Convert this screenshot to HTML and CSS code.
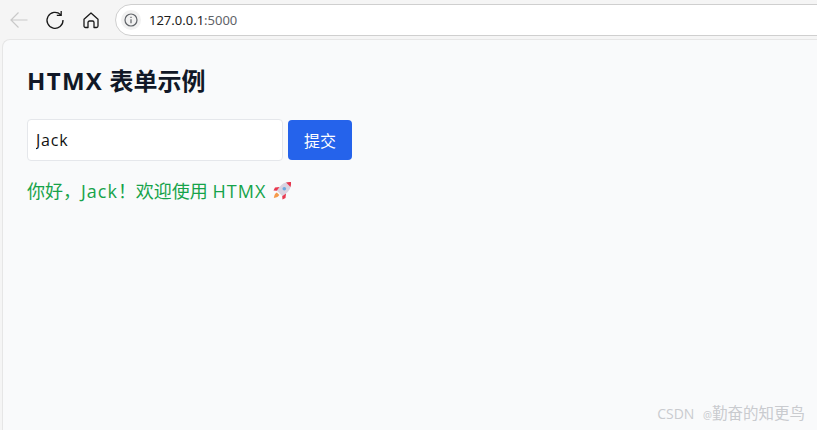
FILE: index.html
```html
<!DOCTYPE html>
<html lang="zh-CN">
<head>
	<meta charset="UTF-8">
	<title>HTMX 表单示例</title>
	<link rel="stylesheet" href="styles.css">
</head>
<body>

	<header class="toolbar">
		<button class="nav-btn back">
			<svg width="20" height="20" viewBox="0 0 20 20"><path d="M18.500 10H2M9.500 2.500 2 10l7.500 7.500" fill="none" stroke="#c9c9c9" stroke-width="1.200"/></svg>
		</button>
		<button class="nav-btn reload">
			<svg width="20" height="20" viewBox="0 0 20 20"><path d="M15.600 4.600A8 8 0 1 0 18 10M16.200 1v4.400h-4.400" fill="none" stroke="#1a1a1a" stroke-width="1.300"/></svg>
		</button>
		<button class="nav-btn home">
			<svg width="18" height="18" viewBox="0 0 18 18"><path d="M2 8.200 9 2l7 6.200V15a1.500 1.500 0 0 1-1.500 1.500H12V11.500a1.500 1.500 0 0 0-1.500-1.500h-3A1.500 1.500 0 0 0 6 11.500v5H3.500A1.500 1.500 0 0 1 2 15z" fill="none" stroke="#1a1a1a" stroke-width="1.300" stroke-linejoin="round"/></svg>
		</button>
		<div class="omnibox">
			<span class="site-info">
				<svg width="14" height="14" viewBox="0 0 14 14"><circle cx="7" cy="7" r="6" fill="none" stroke="#5f6368" stroke-width="1.200"/><path d="M7 6.200v4M7 3.800v1.200" stroke="#5f6368" stroke-width="1.200"/></svg>
			</span>
			<span class="url">127.0.0.1<span class="port">:5000</span></span>
		</div>
	</header>

	<main class="page">
		<h1><span class="latin">HTMX</span> 表单示例</h1>
		<form class="name-form">
			<input type="text" value="Jack">
			<button type="button">提交</button>
		</form>
		<p class="greeting">你好，<span class="latin">Jack</span>！欢迎使用 <span class="latin">HTMX</span>
			<svg class="rocket" width="20" height="20" viewBox="0 0 20 20">
				<path d="M19 1c-5-.5-9 1.500-11.500 5L4.800 9.500l5.700 5.700L14 12.500C17.500 10 19.500 6 19 1z" fill="#d9d3e0"/>
				<path d="M19 1c-1.800-.2-3.400 0-4.900.5l4.400 4.400c.5-1.500.7-3.100.5-4.900z" fill="#e8384f"/>
				<circle cx="12.300" cy="7.700" r="1.800" fill="#6aa9e0"/>
				<path d="M7.500 6 3 6.500 1.500 9.500l3.300.3zM14 12.500l-.5 4.500-3 1.500-.3-3.300z" fill="#e8384f"/>
				<path d="M4.800 11.500c-1.500.8-2.500 2.300-3 5.500 3-.5 4.700-1.500 5.500-3z" fill="#f59a4a"/>
			</svg>
		</p>
		<div class="watermark">CSDN <span class="at">@</span><span class="author">勤奋的知更鸟</span></div>
	</main>

</body>
</html>
```

FILE: styles.css
```css
html, body{
	height: 100%;
}

body{
	margin: 0;
	padding: 0;
	background-color: #f5f5f5;
	font-family: "Open Sans", "Noto Sans CJK SC", sans-serif;
	overflow: hidden;
	display: flex;
	flex-direction: column;
}

.toolbar{
	height: 39px;
	flex: none;
	display: flex;
	align-items: center;
	box-sizing: border-box;
	padding-left: 9px;
}

.nav-btn{
	width: 20px;
	height: 20px;
	padding: 0;
	border: 0;
	background: none;
	display: flex;
	align-items: center;
	justify-content: center;
	margin-right: 16px;
}

.nav-btn.home{
	margin-right: 14px;
}

.omnibox{
	flex: 1;
	height: 32px;
	margin-right: -40px;
	box-sizing: border-box;
	background-color: #fff;
	border: 1px solid #cfcfcf;
	border-radius: 16px;
	display: flex;
	align-items: center;
	padding-left: 5px;
}

.site-info{
	width: 20px;
	height: 20px;
	border-radius: 50%;
	background-color: #f1f1f1;
	display: flex;
	align-items: center;
	justify-content: center;
	margin-right: 8px;
}

.url{
	font-family: "Noto Sans", sans-serif;
	font-size: 13px;
	color: #1c1c1c;
}

.url .port{
	color: #5f6368;
}

.page{
	flex: 1;
	position: relative;
	margin-left: 2px;
	padding: 25px 24px;
	background-color: #f9fafb;
	border-top: 1px solid #e6e6e6;
	border-left: 1px solid #e6e6e6;
	border-top-left-radius: 8px;
	color: #111827;
}

/* the open sans latin runs narrower than the original ui font */
.latin{
	letter-spacing: 0.055em;
}

h1{
	margin: 0 0 22px;
	font-size: 24px;
	line-height: 32px;
	font-weight: 700;
}

.name-form{
	display: flex;
	align-items: center;
	gap: 5px;
	margin-bottom: 16px;
}

.name-form input{
	width: 256px;
	height: 42px;
	box-sizing: border-box;
	padding: 0 8px;
	border: 1px solid #e5e7eb;
	border-radius: 4px;
	background-color: #fff;
	color: #111;
	font-family: inherit;
	font-size: 16px;
	letter-spacing: 0.05em;
	outline: none;
}

.name-form button{
	width: 64px;
	height: 40px;
	border: 0;
	border-radius: 4px;
	background-color: #2563eb;
	color: #fff;
	font-family: inherit;
	font-size: 16px;
}

.greeting{
	margin: 0;
	font-size: 18px;
	line-height: 28px;
	color: #16a34a;
}

.rocket{
	vertical-align: -3px;
	margin-left: 1px;
}

.watermark{
	position: absolute;
	right: 12px;
	bottom: 6px;
	font-size: 14px;
	color: #c9cbcf;
}

.watermark .at{
	margin-left: 5px;
	font-size: 10px;
}

.watermark .author{
	font-size: 15.5px;
}
```
